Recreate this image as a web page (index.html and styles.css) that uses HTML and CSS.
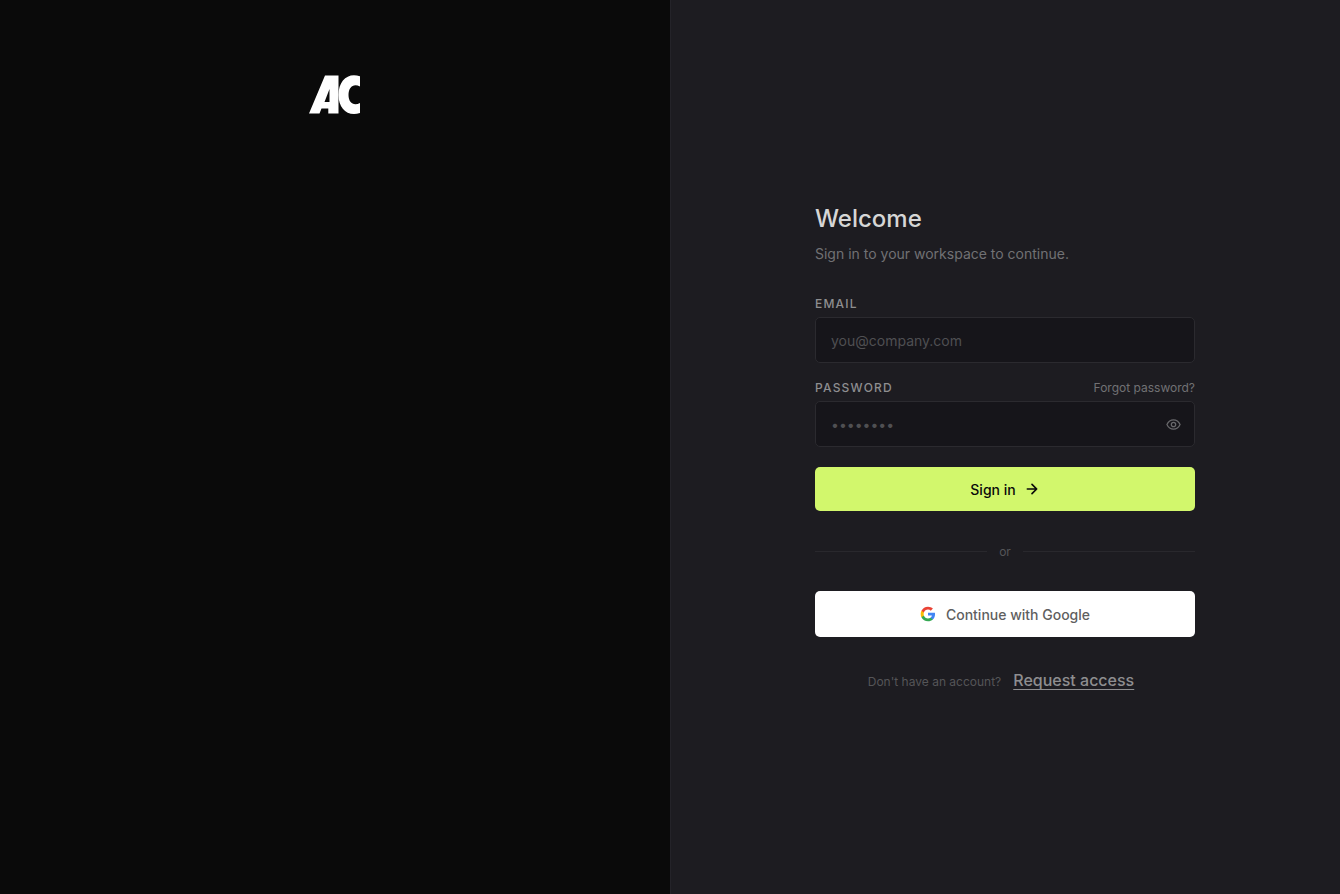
FILE: index.html
```html
<!DOCTYPE html>
<html lang="en">
  <head>
    <meta charset="UTF-8" />
    <meta name="viewport" content="width=device-width, initial-scale=1.0" />
    <title>Sign in</title>
    <link rel="stylesheet" href="styles.css">
  </head>
  <body>
    <div class="page">
      <aside class="brand">
        <svg class="logo" viewBox="0 0 52 40" role="img" aria-label="AC">
          <path fill-rule="evenodd" d="M16 .5H29.500V38.500H19.300V33.500H12.500L10.500 38.500H0ZM20.500 14L15.500 27H20.500Z" />
          <path d="M51 1.300V11.500C44.500 8 39.500 12 39.500 20C39.500 27.500 44.500 31.500 51 28V38C39 42 29.500 34 29.500 20C29.500 5 39.500-3 51 1.300Z" />
        </svg>
      </aside>

      <main class="panel">
        <div class="login">
          <h1>Welcome</h1>
          <p class="subtitle">Sign in to your workspace to continue.</p>

          <form>
            <div class="field">
              <div class="label-row">
                <label for="email">Email</label>
              </div>
              <input type="email" id="email" placeholder="you@company.com" />
            </div>
            <div class="field">
              <div class="label-row">
                <label for="password">Password</label>
                <a href="#" class="forgot">Forgot password?</a>
              </div>
              <div class="password-box">
                <input type="password" id="password" placeholder="••••••••" />
                <button type="button" class="toggle" aria-label="Show password">
                  <svg viewBox="0 0 24 24">
                    <path d="M1.500 12S5 4.500 12 4.500 22.500 12 22.500 12 19 19.500 12 19.500 1.500 12 1.500 12Z" />
                    <circle cx="12" cy="12" r="3.500" />
                  </svg>
                </button>
              </div>
            </div>
            <button type="submit" class="btn btn-primary">
              Sign in
              <svg class="arrow" viewBox="0 0 24 24">
                <path d="M5 12H19M12 5L19 12L12 19" />
              </svg>
            </button>
          </form>

          <div class="divider"><span>or</span></div>

          <button type="button" class="btn btn-google">
            <svg class="google" viewBox="0 0 24 24">
              <path fill="#4285F4" d="M22.560 12.250c0-.78-.07-1.530-.2-2.250H12v4.260h5.920c-.26 1.370-1.040 2.530-2.210 3.310v2.770h3.570c2.080-1.920 3.280-4.740 3.280-8.090z" />
              <path fill="#34A853" d="M12 23c2.970 0 5.460-.98 7.280-2.660l-3.570-2.770c-.98.66-2.230 1.060-3.710 1.060-2.860 0-5.290-1.930-6.160-4.530H2.180v2.840C3.990 20.530 7.700 23 12 23z" />
              <path fill="#FBBC05" d="M5.840 14.090c-.22-.66-.35-1.360-.35-2.090s.13-1.430.35-2.090V7.070H2.180C1.430 8.550 1 10.220 1 12s.43 3.450 1.180 4.930l3.660-2.840z" />
              <path fill="#EA4335" d="M12 5.380c1.620 0 3.060.56 4.210 1.640l3.150-3.150C17.450 2.090 14.970 1 12 1 7.700 1 3.990 3.470 2.180 7.070l3.660 2.840c.87-2.600 3.300-4.530 6.160-4.530z" />
            </svg>
            Continue with Google
          </button>

          <p class="signup">
            Don't have an account?
            <a href="#">Request access</a>
          </p>
        </div>
      </main>
    </div>
  </body>
</html>
```
FILE: styles.css
```css
* {
  box-sizing: border-box;
}
body {
  margin: 0;
  font-family: Inter, sans-serif;
  font-size: 14px;
  background-color: #0a0a0a;
}
h1,
p {
  margin: 0;
}
.page {
  display: grid;
  grid-template-columns: 1fr 1fr;
  min-height: 100vh;
}
.brand {
  display: flex;
  justify-content: center;
  align-items: flex-start;
  padding-top: 75px;
}
.logo {
  width: 52px;
  height: 40px;
  fill: #fff;
}
.panel {
  display: flex;
  justify-content: center;
  align-items: center;
  padding: 20px;
  background-color: #1d1c21;
  box-shadow: inset 1px 0 #242329;
}
.login {
  width: 100%;
  max-width: 380px;
}
h1 {
  font-size: 24px;
  font-weight: 500;
  line-height: 32px;
  color: #d6d6d6;
}
.subtitle {
  margin-top: 8px;
  margin-bottom: 30px;
  line-height: 22px;
  color: #717174;
}
.field {
  margin-bottom: 16px;
}
.label-row {
  display: flex;
  justify-content: space-between;
  align-items: center;
  height: 16px;
  margin-bottom: 6px;
  font-size: 12px;
}
label {
  font-weight: 500;
  letter-spacing: 0.1em;
  text-transform: uppercase;
  color: #8e8e90;
}
.forgot {
  color: #717174;
  text-decoration: none;
}
input {
  display: block;
  width: 100%;
  height: 46px;
  padding: 0 15px;
  font: inherit;
  color: #d6d6d6;
  background-color: #16151a;
  border: 1px solid #2b2a2f;
  border-radius: 5px;
}
input::placeholder {
  color: #4f4f52;
}
.password-box {
  position: relative;
}
.toggle {
  position: absolute;
  top: 0;
  right: 0;
  display: flex;
  align-items: center;
  height: 100%;
  padding: 0 14px;
  background: none;
  border: 0;
  cursor: pointer;
}
.toggle svg {
  width: 15px;
  height: 15px;
  fill: none;
  stroke: #69696c;
  stroke-width: 2;
}
.btn {
  display: flex;
  justify-content: center;
  align-items: center;
  gap: 10px;
  width: 100%;
  font: inherit;
  font-weight: 500;
  border: 0;
  border-radius: 5px;
  cursor: pointer;
}
.btn-primary {
  gap: 8px;
  height: 44px;
  margin-top: 20px;
  color: #0a0a0a;
  background-color: #d2f76c;
}
.arrow {
  width: 16px;
  height: 16px;
  fill: none;
  stroke: #0a0a0a;
  stroke-width: 2.5;
  stroke-linecap: round;
  stroke-linejoin: round;
}
.divider {
  display: flex;
  align-items: center;
  gap: 12px;
  height: 16px;
  margin: 32px 0;
  font-size: 12px;
  color: #555558;
}
.divider::before,
.divider::after {
  content: "";
  flex: 1;
  height: 1px;
  background-color: #29282d;
}
.btn-google {
  height: 46px;
  color: #5f5f5f;
  background-color: #fff;
}
.google {
  width: 16px;
  height: 16px;
}
.signup {
  display: flex;
  justify-content: center;
  align-items: baseline;
  gap: 4px;
  margin-top: 32px;
  font-size: 12px;
  color: #555558;
}
.signup a {
  padding: 0 8px;
  font-size: 16px;
  font-weight: 500;
  line-height: 22px;
  color: #8e8e90;
  text-underline-offset: 3px;
}
```
